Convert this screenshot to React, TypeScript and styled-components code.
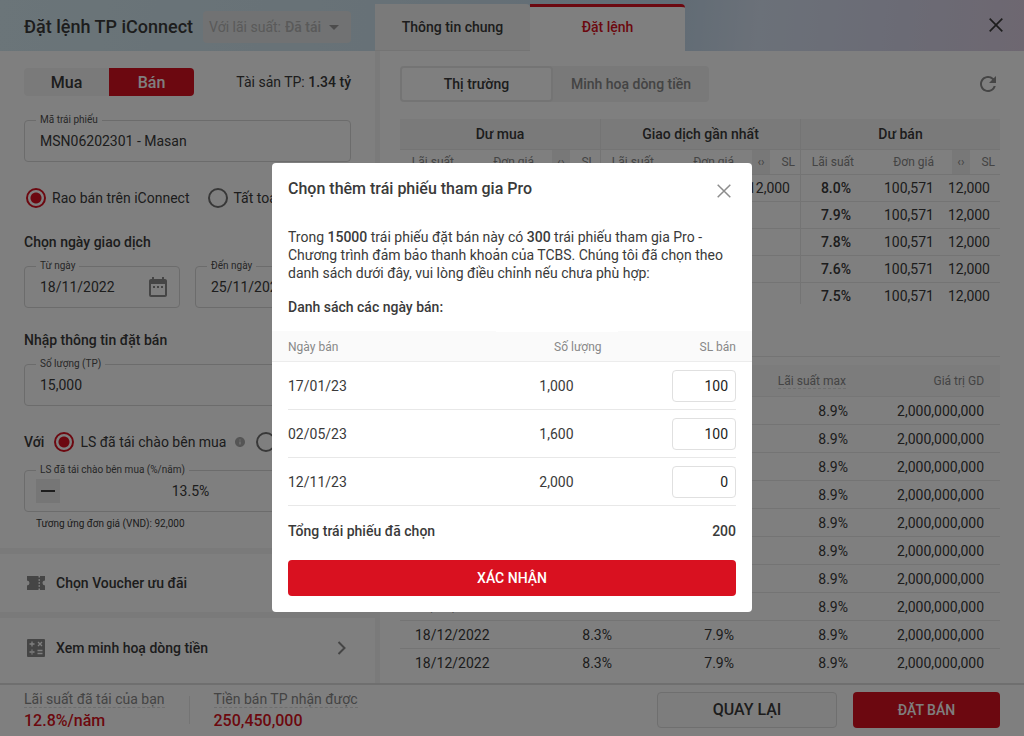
import React, { useState } from "react";
import styled, { createGlobalStyle, css } from "styled-components";
import { MdDateRange, MdRefresh, MdInfo, MdArrowDropDown } from "react-icons/md";

const ink = "#3a3a3a";
const muted = "#888888";
const line = "#e8e8e8";
const red = "#d91120";
const page = "#f4f4f4";

const GlobalStyle = createGlobalStyle`
  *, *::before, *::after { box-sizing: border-box; }
  body { margin: 0; background: ${page}; color: ${ink}; font: 400 14px/18px Roboto, sans-serif; }
  button, input, select { font: inherit; color: inherit; margin: 0; }
  button { cursor: pointer; padding: 0; border: 0; background: none; }
  h1, h2, p { margin: 0; }
  table { border-collapse: separate; border-spacing: 0; width: 100%; table-layout: fixed; }
  th, td { padding: 0; }
`;

const Page = styled.div`
  min-height: 100vh;
  display: grid;
  grid-template-rows: 51px 1fr auto;
`;

const columns = css`
  display: grid;
  grid-template-columns: minmax(0, 375px) minmax(0, 1fr);
`;

const Header = styled.header`
  ${columns}
  background: linear-gradient(96deg, #d6eaf2 0%, #cfe3ee 36%, #c3d8ea 66%, #d7e2f2 74%, #d6d8ec 86%, #dccfe2 100%);
`;

const TitleBar = styled.div`
  display: flex;
  align-items: center;
  gap: 10px;
  padding: 2px 24px 0;
`;

const Title = styled.h1`
  font-size: 18px;
  line-height: 24px;
  font-weight: 500;
  white-space: nowrap;
`;

const RatePicker = styled.div`
  flex: 1;
  display: flex;
  align-items: center;
  height: 32px;
  padding-left: 6px;
  background: #e2e5e6;
  color: #b4b4b4;
  border-radius: 4px;
  white-space: nowrap;
`;

const RateSelect = styled.select`
  appearance: none;
  border: 0;
  padding: 0;
  margin-left: 4px;
  background: none;
  font-weight: 500;
  color: inherit;
  opacity: 1;
`;

const TabBar = styled.div`
  display: flex;
  align-items: stretch;
  padding-top: 4px;
`;

const Tab = styled.button<{ $active?: boolean }>`
  width: 155px;
  padding-bottom: 3px;
  border-top: 3px solid ${(p) => (p.$active ? red : page)};
  border-bottom: 1px solid ${(p) => (p.$active ? "#fff" : "#e8e8e8")};
  border-radius: 0 4px 0 0;
  background: ${(p) => (p.$active ? "#fff" : page)};
  color: ${(p) => (p.$active ? red : ink)};
  font-weight: 500;
`;

const CloseScreen = styled.button`
  margin-left: auto;
  padding: 0 21px 6px;
  display: flex;
  align-items: center;
`;

const Main = styled.main`
  ${columns}
`;

const Side = styled.div`
  display: flex;
  flex-direction: column;
  gap: 6px;
`;

const OrderForm = styled.form`
  background: #fff;
  padding: 17px 24px 16px;
`;

const Row = styled.div<{ $top?: number; $gap?: number }>`
  display: flex;
  align-items: center;
  gap: ${(p) => p.$gap ?? 0}px;
  margin-top: ${(p) => p.$top ?? 0}px;
`;

const SideSwitch = styled.div`
  display: flex;
  width: 170px;
  height: 28px;
  margin-right: auto;
  border-radius: 4px;
  overflow: hidden;
`;

const SideButton = styled.button<{ $active?: boolean }>`
  flex: 1;
  padding-top: 1px;
  font-size: 16px;
  font-weight: 500;
  background: ${(p) => (p.$active ? red : page)};
  color: ${(p) => (p.$active ? "#fff" : ink)};
`;

const Strong = styled.b`
  font-weight: 500;
`;

const FieldBox = styled.div<{ $top?: number }>`
  position: relative;
  flex: 1;
  min-width: 0;
  display: flex;
  align-items: center;
  height: 42px;
  margin-top: ${(p) => p.$top ?? 0}px;
  padding: 0 9px 0 15px;
  border: 1px solid #d8d8d8;
  border-radius: 4px;
  color: #8a8a8a;
`;

const FieldLabel = styled.label`
  position: absolute;
  top: -8px;
  left: 11px;
  padding: 0 4px;
  background: #fff;
  color: #505050;
  font-size: 10px;
  line-height: 14px;
  white-space: nowrap;
`;

const FieldInput = styled.input<{ $center?: boolean }>`
  flex: 1;
  min-width: 0;
  width: 100%;
  padding: 0;
  border: 0;
  outline: 0;
  background: none;
  color: ${ink};
  text-align: ${(p) => (p.$center ? "center" : "left")};
`;

const Step = styled.button`
  flex: none;
  width: 24px;
  height: 24px;
  margin: 0 -4px;
  display: flex;
  align-items: center;
  justify-content: center;
  background: #ececec;
  color: ${ink};
`;

const Choice = styled.label`
  display: flex;
  align-items: center;
  gap: 6px;
  white-space: nowrap;
`;

const RadioInput = styled.input`
  appearance: none;
  flex: none;
  width: 20px;
  height: 20px;
  margin: 0 0 0 2px;
  border: 2px solid #707070;
  border-radius: 50%;
  &:checked {
    border-color: ${red};
    background: radial-gradient(circle, ${red} 5px, transparent 6px);
  }
`;

const SectionTitle = styled.h2<{ $top: number }>`
  margin-top: ${(p) => p.$top}px;
  font-size: 14px;
  line-height: 18px;
  font-weight: 500;
`;

const Hint = styled.p`
  margin: 4px 12px 0;
  font-size: 10px;
  line-height: 16px;
`;

const LinkCard = styled.a<{ $grow?: boolean }>`
  flex: ${(p) => (p.$grow ? "1" : "none")};
  display: flex;
  align-items: center;
  gap: 8px;
  min-height: 58px;
  padding: 0 21px ${(p) => (p.$grow ? 6 : 0)}px 24px;
  background: #fff;
  color: ${ink};
  font-weight: 500;
  text-decoration: none;
`;

const IconSlot = styled.span<{ $right?: boolean }>`
  display: flex;
  width: 24px;
  justify-content: center;
  margin-left: ${(p) => (p.$right ? "auto" : "0")};
  color: #8a8a8a;
`;

const Market = styled.section`
  margin-left: 5px;
  padding: 15px 24px 6px 20px;
  background: #fff;
`;

const ViewSwitch = styled.div`
  display: flex;
  width: 309px;
  height: 36px;
  margin-right: auto;
  border-radius: 4px;
  background: #f2f2f2;
`;

const ViewButton = styled.button<{ $active?: boolean }>`
  flex: 1 1 0;
  border-radius: 4px;
  font-weight: 500;
  color: ${(p) => (p.$active ? ink : muted)};
  ${(p) => p.$active && css`flex: none; width: 153px; background: #fff; border: 2px solid #e9e9e9;`}
`;

const RefreshButton = styled.button`
  display: flex;
  color: #8a8a8a;
`;

const BookWrap = styled.div`
  height: 185px;
  margin-top: 17px;
  overflow: hidden;
`;

const GroupHead = styled.th`
  height: 31px;
  background: #f5f5f5;
  border-bottom: 1px solid ${line};
  font-weight: 500;
  & + & { border-left: 1px solid ${line}; }
`;

const BookHead = styled.th<{ $first?: boolean; $shade?: boolean; $pad?: number }>`
  height: 25px;
  padding-right: ${(p) => p.$pad ?? 0}px;
  border-bottom: 1px solid ${line};
  border-left: ${(p) => (p.$first ? `1px solid ${line}` : "0")};
  background: ${(p) => (p.$shade ? "#f0f0f0" : "none")};
  color: ${muted};
  font-size: 12px;
  font-weight: 400;
  text-align: ${(p) => (p.$shade ? "center" : "right")};
`;

const BookCell = styled.td<{ $first?: boolean; $strong?: boolean; $pad?: number }>`
  height: 27px;
  padding-right: ${(p) => p.$pad ?? 0}px;
  border-bottom: 1px solid ${line};
  border-left: ${(p) => (p.$first ? `1px solid ${line}` : "0")};
  font-weight: ${(p) => (p.$strong ? 500 : 400)};
  text-align: right;
`;

const EndAligned = styled.div`
  display: flex;
  justify-content: flex-end;
`;

const HistoryWrap = styled.div`
  margin-top: 52px;
  padding-top: 8px;
  border-top: 1px solid ${line};
`;

const HistoryHead = styled.th<{ $left?: boolean; $pad?: number }>`
  height: 32px;
  padding: 0 ${(p) => p.$pad ?? 0}px 0 ${(p) => (p.$left ? 15 : 0)}px;
  background: #f8f8f8;
  border-bottom: 1px solid #ececec;
  color: ${muted};
  font-size: 12px;
  font-weight: 400;
  text-align: ${(p) => (p.$left ? "left" : "right")};
`;

const Dashed = styled.span`
  border-bottom: 1px dashed #dcdcdc;
`;

const HistoryCell = styled.td<{ $left?: boolean; $pad?: number }>`
  height: 28px;
  padding: 0 ${(p) => p.$pad ?? 0}px 0 ${(p) => (p.$left ? 15 : 0)}px;
  border-bottom: 1px solid ${line};
  text-align: ${(p) => (p.$left ? "left" : "right")};
  tr:last-child & { border-bottom: 0; }
`;

const Footer = styled.footer`
  display: flex;
  align-items: center;
  gap: 16px;
  height: 53px;
  padding: 0 24px 2px;
  border-top: 2px solid #dedede;
  background: #fff;
`;

const Stat = styled.div<{ $divided?: boolean }>`
  color: ${muted};
  line-height: 18px;
  ${(p) => p.$divided && css`margin-left: 32px;`}
`;

const VLine = styled.div`
  width: 1px;
  height: 28px;
  margin: 0 -24px 0 8px;
  background: ${line};
`;

const StatValue = styled.div`
  margin-top: 4px;
  color: ${red};
  font-size: 16px;
  font-weight: 500;
`;

const Action = styled.button<{ $kind: "plain" | "primary"; $width?: number; $first?: boolean }>`
  width: ${(p) => (p.$width ? `${p.$width}px` : "100%")};
  height: 36px;
  margin-left: ${(p) => (p.$first ? "auto" : "0")};
  border: ${(p) => (p.$kind === "plain" ? "1px solid #dedede" : "0")};
  border-radius: 4px;
  background: ${(p) => (p.$kind === "plain" ? "#fafafa" : red)};
  color: ${(p) => (p.$kind === "plain" ? ink : "#fff")};
  font-size: ${(p) => (p.$kind === "plain" ? 16 : 14)}px;
  font-weight: 500;
`;

const Backdrop = styled.div`
  position: fixed;
  inset: 0;
  display: flex;
  justify-content: center;
  align-items: flex-start;
  padding: 163px 16px 16px;
  background: rgba(0, 0, 0, 0.5);
  overflow: auto;
`;

const Dialog = styled.div`
  width: 100%;
  max-width: 480px;
  padding: 16px;
  border-radius: 4px;
  background: #fff;
`;

const DialogHead = styled.div`
  display: flex;
  justify-content: space-between;
  align-items: flex-start;
  padding-right: 5px;
`;

const DialogTitle = styled.h2`
  font-size: 16px;
  line-height: 20px;
  font-weight: 500;
`;

const DialogClose = styled.button`
  display: flex;
  padding-top: 5px;
  color: #8c8c8c;
`;

const DialogText = styled.p`
  margin-top: 29px;
`;

const ListTitle = styled.p`
  margin: 16px 0;
  font-weight: 500;
`;

const LotHead = styled.th<{ $left?: boolean }>`
  height: 30px;
  background: #fafafa;
  box-shadow: inset 0 -1px 0 #ececec;
  color: ${muted};
  font-size: 12px;
  font-weight: 400;
  text-align: ${(p) => (p.$left ? "left" : "right")};
  &:first-child { box-shadow: inset 0 -1px 0 #ececec, -16px -1px 0 #fafafa, -16px 0 0 #ececec; }
  &:last-child { box-shadow: inset 0 -1px 0 #ececec, 16px -1px 0 #fafafa, 16px 0 0 #ececec; }
`;

const LotCell = styled.td<{ $left?: boolean; $pad?: number }>`
  height: 48px;
  padding-right: ${(p) => p.$pad ?? 0}px;
  border-bottom: 1px solid #e8e8e8;
  text-align: ${(p) => (p.$left ? "left" : "right")};
`;

const LotInput = styled.input`
  width: 64px;
  height: 32px;
  padding: 0 7px;
  border: 1px solid #e0e0e0;
  border-radius: 4px;
  text-align: right;
  color: #222;
  vertical-align: middle;
`;

const Total = styled.div`
  display: flex;
  justify-content: space-between;
  padding: 16px 0 20px;
  font-weight: 500;
`;

const Cross = ({ width }: { width: number }) => (
  <svg width="14" height="14" viewBox="0 0 14 14" fill="none" stroke="currentColor" strokeWidth={width}>
    <path d="M.7.7l12.6 12.6M13.3.7L.7 13.3" />
  </svg>
);

const TicketIcon = () => (
  <svg width="18" height="14" viewBox="0 0 18 14" fill="currentColor">
    <path d="M1 0h10.500v1.500h1.500V0h5v4.500a2.500 2.500 0 000 5V14h-5v-1.500h-1.500V14H0V9.500a2.500 2.500 0 000-5V0z" />
    <path d="M12.200 3v2M12.200 6v2M12.200 9v2" stroke="#fff" strokeWidth="1.200" />
  </svg>
);

const CalcIcon = () => (
  <svg width="18" height="18" viewBox="0 0 18 18">
    <rect width="18" height="18" rx="1" fill="currentColor" />
    <path
      d="M5 2.500v5M2.500 5h5M11 3l4 4M15 3l-4 4M2.500 13h5M10.500 11.500h5M10.500 14.500h5M5 10.500v1.200M5 14.300v1.200"
      stroke="#fff"
      strokeWidth="1.300"
      fill="none"
    />
  </svg>
);

const Chevron = () => (
  <svg width="10" height="14" viewBox="0 0 10 14" fill="none" stroke="currentColor" strokeWidth="2">
    <path d="M1.500 1l6 6-6 6" />
  </svg>
);

type FieldProps = {
  id: string;
  label: string;
  value: string;
  top?: number;
  calendar?: boolean;
};

const Field = ({ id, label, value, top, calendar }: FieldProps) => (
  <FieldBox $top={top}>
    <FieldLabel htmlFor={id}>{label}</FieldLabel>
    <FieldInput id={id} defaultValue={value} />
    {calendar && <MdDateRange size={24} />}
  </FieldBox>
);

const asks = ["8.0%", "7.9%", "7.8%", "7.6%", "7.5%"];
const groups = ["Dư mua", "Giao dịch gần nhất", "Dư bán"];
const history = Array.from({ length: 10 }, (_, i) => i);

const OrderBook = () => (
  <BookWrap>
    <table>
      <colgroup>
        {groups.map((g) => (
          <React.Fragment key={g}>
            <col width="9%" />
            <col />
            <col width="18" />
            <col width="30" />
          </React.Fragment>
        ))}
      </colgroup>
      <thead>
        <tr>
          {groups.map((g) => (
            <GroupHead key={g} colSpan={4}>{g}</GroupHead>
          ))}
        </tr>
        <tr>
          {groups.map((g, i) => (
            <React.Fragment key={g}>
              <BookHead $first={i > 0}>Lãi suất</BookHead>
              <BookHead $pad={18}>Đơn giá</BookHead>
              <BookHead $shade>‹›</BookHead>
              <BookHead $pad={5}>SL</BookHead>
            </React.Fragment>
          ))}
        </tr>
      </thead>
      <tbody>
        {asks.map((rate, row) => (
          <tr key={rate}>
            {groups.map((g, i) => {
              const filled = i !== 1 || row === 0;
              return (
                <React.Fragment key={g}>
                  <BookCell $first={i > 0} $strong $pad={3}>{filled && rate}</BookCell>
                  <BookCell $pad={18}>{filled && "100,571"}</BookCell>
                  <BookCell colSpan={2} $pad={10}>{filled && <EndAligned>12,000</EndAligned>}</BookCell>
                </React.Fragment>
              );
            })}
          </tr>
        ))}
      </tbody>
    </table>
  </BookWrap>
);

const History = () => (
  <HistoryWrap>
    <table>
      <colgroup>
        <col width="20%" />
        <col width="18%" />
        <col width="20%" />
        <col width="19%" />
        <col width="23%" />
      </colgroup>
      <thead>
        <tr>
          <HistoryHead $left>Ngày</HistoryHead>
          <HistoryHead $pad={16}>Lãi suất TB</HistoryHead>
          <HistoryHead $pad={16}>Lãi suất min</HistoryHead>
          <HistoryHead $pad={16}><Dashed>Lãi suất max</Dashed></HistoryHead>
          <HistoryHead $pad={16}>Giá trị GD</HistoryHead>
        </tr>
      </thead>
      <tbody>
        {history.map((i) => (
          <tr key={i}>
            <HistoryCell $left>18/12/2022</HistoryCell>
            <HistoryCell $pad={16}>8.3%</HistoryCell>
            <HistoryCell $pad={14}>7.9%</HistoryCell>
            <HistoryCell $pad={14}>8.9%</HistoryCell>
            <HistoryCell $pad={16}>2,000,000,000</HistoryCell>
          </tr>
        ))}
      </tbody>
    </table>
  </HistoryWrap>
);

const lots = [
  { date: "17/01/23", quantity: "1,000", sell: "100" },
  { date: "02/05/23", quantity: "1,600", sell: "100" },
  { date: "12/11/23", quantity: "2,000", sell: "0" },
];

const LotDialog = () => {
  const [sells, setSells] = useState(lots.map((l) => l.sell));
  const total = sells.reduce((sum, s) => sum + (Number(s) || 0), 0);
  return (
    <Backdrop>
      <Dialog role="dialog" aria-modal="true" aria-labelledby="lot-title">
        <DialogHead>
          <DialogTitle id="lot-title">Chọn thêm trái phiếu tham gia Pro</DialogTitle>
          <DialogClose aria-label="Đóng"><Cross width={1.5} /></DialogClose>
        </DialogHead>
        <DialogText>
          Trong <Strong>15000</Strong> trái phiếu đặt bán này có <Strong>300</Strong> trái phiếu tham gia Pro -
          Chương trình đảm bảo thanh khoản của TCBS. Chúng tôi đã chọn theo danh sách dưới đây, vui lòng điều
          chỉnh nếu chưa phù hợp:
        </DialogText>
        <ListTitle>Danh sách các ngày bán:</ListTitle>
        <table>
          <colgroup>
            <col width="50%" />
            <col width="20%" />
            <col width="30%" />
          </colgroup>
          <thead>
            <tr>
              <LotHead $left>Ngày bán</LotHead>
              <LotHead>Số lượng</LotHead>
              <LotHead>SL bán</LotHead>
            </tr>
          </thead>
          <tbody>
            {lots.map((lot, i) => (
              <tr key={lot.date}>
                <LotCell $left>{lot.date}</LotCell>
                <LotCell $pad={28}>{lot.quantity}</LotCell>
                <LotCell>
                  <LotInput
                    aria-label={`SL bán ${lot.date}`}
                    value={sells[i]}
                    onChange={(e) => setSells(sells.map((s, j) => (j === i ? e.target.value : s)))}
                  />
                </LotCell>
              </tr>
            ))}
          </tbody>
        </table>
        <Total>
          <span>Tổng trái phiếu đã chọn</span>
          <span>{total}</span>
        </Total>
        <Action $kind="primary">XÁC NHẬN</Action>
      </Dialog>
    </Backdrop>
  );
};

export default function App() {
  return (
    <>
      <GlobalStyle />
      <Page>
        <Header>
          <TitleBar>
            <Title>Đặt lệnh TP iConnect</Title>
            <RatePicker>
              <label htmlFor="rate-kind">Với lãi suất:</label>
              <RateSelect id="rate-kind" disabled>
                <option>Đã tái</option>
              </RateSelect>
              <MdArrowDropDown size={24} color="#999" />
            </RatePicker>
          </TitleBar>
          <TabBar>
            <Tab>Thông tin chung</Tab>
            <Tab $active>Đặt lệnh</Tab>
            <CloseScreen aria-label="Đóng màn hình"><Cross width={1.7} /></CloseScreen>
          </TabBar>
        </Header>
        <Main>
          <Side>
            <OrderForm>
              <Row>
                <SideSwitch>
                  <SideButton type="button">Mua</SideButton>
                  <SideButton type="button" $active>Bán</SideButton>
                </SideSwitch>
                <span>Tài sản TP: <Strong>1.34 tỷ</Strong></span>
              </Row>
              <Field id="bond" label="Mã trái phiếu" value="MSN06202301 - Masan" top={24} />
              <Row $top={26} $gap={16}>
                <Choice><RadioInput type="radio" name="mode" defaultChecked />Rao bán trên iConnect</Choice>
                <Choice><RadioInput type="radio" name="mode" />Tất toán sớm</Choice>
              </Row>
              <SectionTitle $top={25}>Chọn ngày giao dịch</SectionTitle>
              <Row $top={15} $gap={15}>
                <Field id="from" label="Từ ngày" value="18/11/2022" calendar />
                <Field id="to" label="Đến ngày" value="25/11/2022" calendar />
              </Row>
              <SectionTitle $top={23}>Nhập thông tin đặt bán</SectionTitle>
              <Field id="quantity" label="Số lượng (TP)" value="15,000" top={15} />
              <Row $top={26} $gap={8}>
                <Strong>Với</Strong>
                <Choice><RadioInput type="radio" name="rate" defaultChecked />LS đã tái chào bên mua</Choice>
                <MdInfo size={12} color="#aaa" />
                <Choice><RadioInput type="radio" name="rate" />Giá</Choice>
              </Row>
              <FieldBox $top={18}>
                <FieldLabel htmlFor="rate-value">LS đã tái chào bên mua (%/năm)</FieldLabel>
                <Step type="button" aria-label="Giảm">
                  <svg width="14" height="2"><rect width="14" height="2" fill="currentColor" /></svg>
                </Step>
                <FieldInput id="rate-value" defaultValue="13.5%" $center />
                <Step type="button" aria-label="Tăng">
                  <svg width="14" height="14"><path d="M0 6h14v2H0zM6 0h2v14H6z" fill="currentColor" /></svg>
                </Step>
              </FieldBox>
              <Hint>Tương ứng đơn giá (VND): 92,000</Hint>
            </OrderForm>
            <LinkCard href="#voucher">
              <IconSlot><TicketIcon /></IconSlot>
              Chọn Voucher ưu đãi
            </LinkCard>
            <LinkCard href="#cashflow" $grow>
              <IconSlot><CalcIcon /></IconSlot>
              Xem minh hoạ dòng tiền
              <IconSlot $right><Chevron /></IconSlot>
            </LinkCard>
          </Side>
          <Market>
            <Row>
              <ViewSwitch>
                <ViewButton $active>Thị trường</ViewButton>
                <ViewButton>Minh hoạ dòng tiền</ViewButton>
              </ViewSwitch>
              <RefreshButton aria-label="Tải lại"><MdRefresh size={24} /></RefreshButton>
            </Row>
            <OrderBook />
            <History />
          </Market>
        </Main>
        <Footer>
          <Stat>
            <Dashed>Lãi suất đã tái của bạn</Dashed>
            <StatValue>12.8%/năm</StatValue>
          </Stat>
          <VLine />
          <Stat $divided>
            <Dashed>Tiền bán TP nhận được</Dashed>
            <StatValue>250,450,000</StatValue>
          </Stat>
          <Action $kind="plain" $width={180} $first>QUAY LẠI</Action>
          <Action $kind="primary" $width={147}>ĐẶT BÁN</Action>
        </Footer>
      </Page>
      <LotDialog />
    </>
  );
}
